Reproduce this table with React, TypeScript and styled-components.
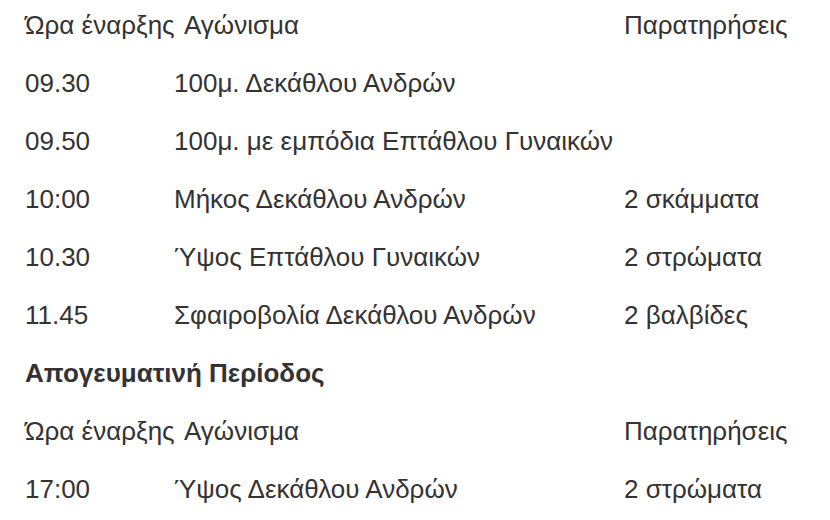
import styled, { createGlobalStyle } from 'styled-components';

interface Event {
  time: string;
  name: string;
  note?: string;
}

const morning: Event[] = [
  { time: '09.30', name: '100μ. Δεκάθλου Ανδρών' },
  { time: '09.50', name: '100μ. με εμπόδια Επτάθλου Γυναικών' },
  { time: '10:00', name: 'Μήκος Δεκάθλου Ανδρών', note: '2 σκάμματα' },
  { time: '10.30', name: 'Ύψος Επτάθλου Γυναικών', note: '2 στρώματα' },
  { time: '11.45', name: 'Σφαιροβολία Δεκάθλου Ανδρών', note: '2 βαλβίδες' }
];

const afternoon: Event[] = [
  { time: '17:00', name: 'Ύψος Δεκάθλου Ανδρών', note: '2 στρώματα' }
];

const GlobalStyle = createGlobalStyle`
  html, body {
    margin: 0;
    background: #ffffff;
  }
  body {
    font-family: "Liberation Sans", Arial, sans-serif;
    color: #333333;
  }
`;

const Page = styled.div`
  display: flex;
  flex-direction: column;
  gap: 30px;
  padding: 11px 0 0 25px;
  width: 830px;
  height: 520px;
  box-sizing: border-box;
  overflow: hidden;
`;

const Row = styled.div<{ $head?: boolean }>`
  display: grid;
  grid-template-columns: ${p => (p.$head ? '159px 440px' : '149px 450px')} auto;
  font-size: 26px;
  line-height: 28px;
  white-space: nowrap;
`;

const Cell = styled.span``;

const SectionTitle = styled.h3`
  margin: 0;
  font-size: 26px;
  line-height: 28px;
  font-weight: 700;
`;

const Header = () => (
  <Row $head>
    <Cell>Ώρα έναρξης</Cell>
    <Cell>Αγώνισμα</Cell>
    <Cell>Παρατηρήσεις</Cell>
  </Row>
);

const EventRow = ({ time, name, note }: Event) => (
  <Row>
    <Cell>{time}</Cell>
    <Cell>{name}</Cell>
    <Cell>{note}</Cell>
  </Row>
);

export default function App() {
  return (
    <>
      <GlobalStyle />
      <Page>
        <Header />
        {morning.map(e => (
          <EventRow key={e.time} {...e} />
        ))}
        <SectionTitle>Απογευματινή Περίοδος</SectionTitle>
        <Header />
        {afternoon.map(e => (
          <EventRow key={e.time} {...e} />
        ))}
      </Page>
    </>
  );
}
